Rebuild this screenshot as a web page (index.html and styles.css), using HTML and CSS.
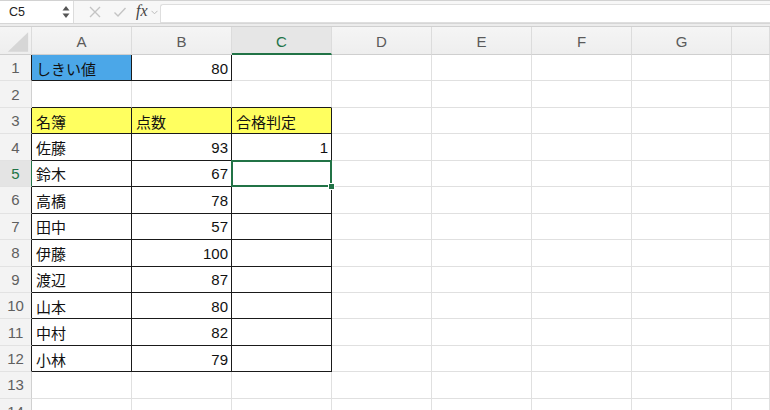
FILE: index.html
```html
<!DOCTYPE html>
<html lang="ja">
<head>
<meta charset="utf-8">
<title>Sheet</title>
<link rel="stylesheet" href="styles.css">
</head>
<body>
<div class="toolbar">
  <div class="namebox">
    <span class="name">C5</span>
    <svg class="spin" width="8" height="14" viewBox="0 0 8 14"><path d="M4 1 L7.5 5.5 L0.5 5.5 Z" fill="#555"/><path d="M4 13 L7.5 8.5 L0.5 8.5 Z" fill="#555"/></svg>
  </div>
  <div class="tools">
    <svg class="ico" width="14" height="14" viewBox="0 0 14 14"><path d="M2 2 L12 12 M12 2 L2 12" stroke="#c4c4c4" stroke-width="1.4" fill="none"/></svg>
    <svg class="ico" width="14" height="14" viewBox="0 0 14 14"><path d="M1.5 7.5 L5 11 L12.5 3" stroke="#c4c4c4" stroke-width="1.4" fill="none"/></svg>
    <span class="fx">fx</span>
    <svg class="chev" width="7" height="5" viewBox="0 0 7 5"><path d="M0.5 0.8 L3.5 3.8 L6.5 0.8" stroke="#bbb" stroke-width="1" fill="none"/></svg>
  </div>
  <div class="formula"></div>
</div>
<div class="gap"></div>
<div class="sheet">
  <div class="hd corner"><svg width="32" height="28" viewBox="0 0 32 28"><path d="M29 5 L29 25 L8 25 Z" fill="#d6d6d6"/></svg></div>
  <div class="hd col">A</div><div class="hd col">B</div><div class="hd col sel">C</div><div class="hd col">D</div><div class="hd col">E</div><div class="hd col">F</div><div class="hd col">G</div><div class="hd col"></div>

  <div class="rh blk">1</div><div class="c b blue">しきい値</div><div class="c b num">80</div><div class="c"></div><div class="c"></div><div class="c"></div><div class="c"></div><div class="c"></div><div class="c"></div>
  <div class="rh">2</div><div class="c bb"></div><div class="c bb"></div><div class="c bb"></div><div class="c"></div><div class="c"></div><div class="c"></div><div class="c"></div><div class="c"></div>
  <div class="rh blk">3</div><div class="c b yel">名簿</div><div class="c b yel">点数</div><div class="c b yel">合格判定</div><div class="c"></div><div class="c"></div><div class="c"></div><div class="c"></div><div class="c"></div>
  <div class="rh blk">4</div><div class="c b">佐藤</div><div class="c b num">93</div><div class="c b num">1</div><div class="c"></div><div class="c"></div><div class="c"></div><div class="c"></div><div class="c"></div>
  <div class="rh blk selr">5</div><div class="c b">鈴木</div><div class="c b num">67</div><div class="c b active"><span class="cursor"><span class="handle"></span></span></div><div class="c"></div><div class="c"></div><div class="c"></div><div class="c"></div><div class="c"></div>
  <div class="rh blk">6</div><div class="c b">高橋</div><div class="c b num">78</div><div class="c b"></div><div class="c"></div><div class="c"></div><div class="c"></div><div class="c"></div><div class="c"></div>
  <div class="rh blk">7</div><div class="c b">田中</div><div class="c b num">57</div><div class="c b"></div><div class="c"></div><div class="c"></div><div class="c"></div><div class="c"></div><div class="c"></div>
  <div class="rh blk">8</div><div class="c b">伊藤</div><div class="c b num">100</div><div class="c b"></div><div class="c"></div><div class="c"></div><div class="c"></div><div class="c"></div><div class="c"></div>
  <div class="rh blk">9</div><div class="c b">渡辺</div><div class="c b num">87</div><div class="c b"></div><div class="c"></div><div class="c"></div><div class="c"></div><div class="c"></div><div class="c"></div>
  <div class="rh blk">10</div><div class="c b">山本</div><div class="c b num">80</div><div class="c b"></div><div class="c"></div><div class="c"></div><div class="c"></div><div class="c"></div><div class="c"></div>
  <div class="rh blk">11</div><div class="c b">中村</div><div class="c b num">82</div><div class="c b"></div><div class="c"></div><div class="c"></div><div class="c"></div><div class="c"></div><div class="c"></div>
  <div class="rh blk">12</div><div class="c b">小林</div><div class="c b num">79</div><div class="c b"></div><div class="c"></div><div class="c"></div><div class="c"></div><div class="c"></div><div class="c"></div>
  <div class="rh">13</div><div class="c"></div><div class="c"></div><div class="c"></div><div class="c"></div><div class="c"></div><div class="c"></div><div class="c"></div><div class="c"></div>
  <div class="rh">14</div><div class="c"></div><div class="c"></div><div class="c"></div><div class="c"></div><div class="c"></div><div class="c"></div><div class="c"></div><div class="c"></div>
</div>
</body>
</html>
```

FILE: styles.css
```css
* { box-sizing: border-box; }
html, body {
  margin: 0;
  padding: 0;
  background: #fff;
  overflow: hidden;
  font-family: "Liberation Sans", "Noto Sans CJK JP", sans-serif;
}
.toolbar {
  height: 24px;
  display: flex;
  align-items: stretch;
  background: #f7f7f7;
  border-top: 1px solid #d2d2d2;
  border-bottom: 1px solid #d6d6d6;
}
.namebox {
  width: 74px;
  background: #fff;
  border-right: 1px solid #dcdcdc;
  display: flex;
  align-items: center;
  justify-content: space-between;
  padding: 0 3px 0 9px;
}
.name {
  font-size: 12.5px;
  color: #222;
}
.spin { display: block; }
.tools {
  width: 86px;
  display: flex;
  align-items: center;
  padding-left: 14px;
  gap: 0;
}
.tools .ico { margin-right: 11px; }
.tools .ico + .ico { margin-right: 9px; }
.fx {
  font-family: "Liberation Serif", serif;
  font-style: italic;
  font-size: 16px;
  color: #444;
  margin-right: 3px;
  line-height: 1;
  padding-bottom: 2px;
}
.chev { margin-top: 1px; }
.formula {
  flex: 1;
  margin: 3px 0 0 0;
  background: #fff;
  border: 1px solid #dedede;
  border-right: none;
  border-radius: 3px 0 0 0;
}
.gap {
  height: 3px;
  background: #ececec;
  border-bottom: 1px solid #d0d0d0;
}
.sheet {
  display: grid;
  grid-template-columns: 32px repeat(7, 100px) 1fr;
  grid-template-rows: 28px repeat(14, 26.45px);
}
.hd {
  background: linear-gradient(#f5f5f5, #eeeeee);
  border-right: 1px solid #dcdcdc;
  border-bottom: 1px solid #cfcfcf;
  color: #5a5a5a;
  font-size: 15px;
  display: flex;
  align-items: center;
  justify-content: center;
  padding-top: 1px;
}
.corner { padding: 0; }
.corner svg { display: block; }
.hd.sel {
  background: #e6e6e6;
  color: #217346;
  border-bottom: 2px solid #217346;
  padding-top: 2px;
}
.rh {
  background: #f3f3f3;
  border-right: 1px solid #d0d0d0;
  border-bottom: 1px solid #e2e2e2;
  color: #5f5f5f;
  font-size: 15px;
  display: flex;
  align-items: center;
  justify-content: center;
}
.rh.blk { border-right-color: #1a1a1a; }
.rh.selr {
  background: #e4e4e4;
  color: #217346;
  border-right: 1px solid #217346;
}
.c {
  border-right: 1px solid #e0e0e0;
  border-bottom: 1px solid #e0e0e0;
  font-size: 15px;
  color: #111;
  display: flex;
  align-items: center;
  padding: 1px 3px 0 4px;
  white-space: nowrap;
  position: relative;
}
.c.b {
  border-right-color: #1a1a1a;
  border-bottom-color: #1a1a1a;
}
.c.bb { border-bottom-color: #1a1a1a; }
.num { justify-content: flex-end; }
.blue { background: #4ba7e8; }
.yel { background: #ffff5f; }
.cursor {
  position: absolute;
  top: -1px;
  left: -1px;
  right: -1px;
  bottom: -1px;
  border: 2px solid #217346;
  z-index: 2;
}
.handle {
  position: absolute;
  right: -5px;
  bottom: -5px;
  width: 7px;
  height: 7px;
  background: #217346;
  border: 1px solid #fff;
}
```
